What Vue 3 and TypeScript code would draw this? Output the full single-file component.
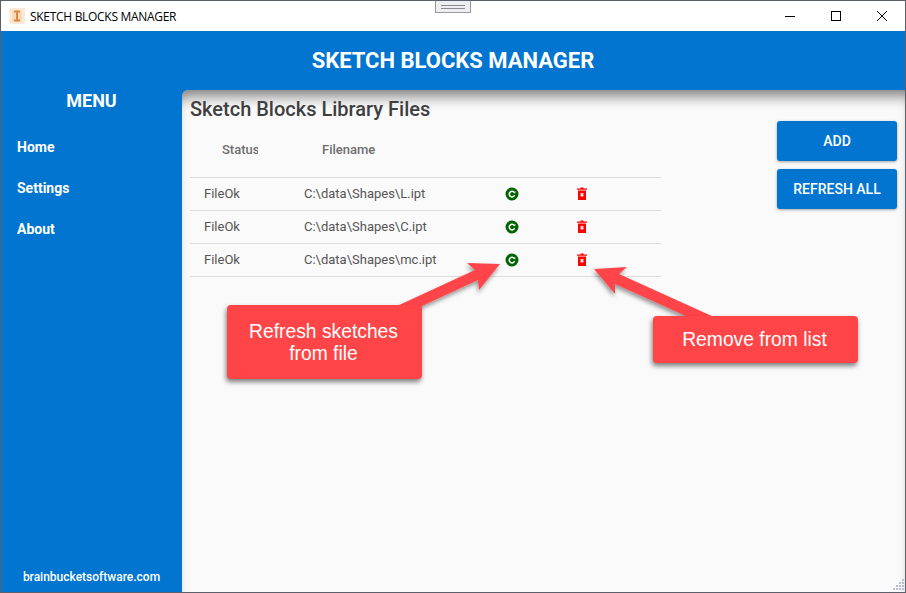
<script setup lang="ts">
interface Row { status: string; file: string }
const rows: Row[] = [
  { status: 'FileOk', file: 'C:\\data\\Shapes\\L.ipt' },
  { status: 'FileOk', file: 'C:\\data\\Shapes\\C.ipt' },
  { status: 'FileOk', file: 'C:\\data\\Shapes\\mc.ipt' },
]
const menu: string[] = ['Home', 'Settings', 'About']
const grip: [number, number][] = [[10,0],[7,3],[10,3],[4,6],[7,6],[10,6],[1,9],[4,9],[7,9],[10,9]]
</script>

<template>
  <div class="window">
    <div class="titlebar">
      <svg class="logo" width="16" height="16" viewBox="0 0 16 16">
        <rect width="16" height="16" fill="#fde9d9" />
        <rect x="3" y="2" width="10" height="12" fill="#fbd9bc" />
        <path d="M5 2.500h6v2H9v7h2v2H5v-2h2v-7H5z" fill="#d98a3d" />
      </svg>
      <span class="wintitle">SKETCH BLOCKS MANAGER</span>
      <div class="winbtns">
        <svg width="12" height="12" viewBox="0 0 12 12"><path d="M1 6.500h10" stroke="#000" fill="none" /></svg>
        <svg width="12" height="12" viewBox="0 0 12 12"><rect x="1.500" y="1.500" width="9" height="9" stroke="#000" fill="none" /></svg>
        <svg width="12" height="12" viewBox="0 0 12 12"><path d="M1 1l10 10M11 1L1 11" stroke="#000" fill="none" /></svg>
      </div>
    </div>
    <header class="appbar">SKETCH BLOCKS MANAGER</header>
    <div class="body">
      <aside class="sidebar">
        <div class="menutitle">MENU</div>
        <nav class="nav">
          <a v-for="m in menu" :key="m" class="navitem">{{ m }}</a>
        </nav>
        <div class="site">brainbucketsoftware.com</div>
      </aside>
      <main class="content">
        <section class="library">
          <h1 class="heading">Sketch Blocks Library Files</h1>
          <div class="thead">
            <span class="th status">Status</span>
            <span class="th">Filename</span>
          </div>
          <div v-for="r in rows" :key="r.file" class="row">
            <span class="cell">{{ r.status }}</span>
            <span class="cell">{{ r.file }}</span>
            <span class="iconcell">
              <svg width="14" height="14" viewBox="0 0 14 14">
                <circle cx="7" cy="7" r="6.500" fill="#006400" />
                <path d="M9.300 5.400A2.800 2.800 0 1 0 9.600 8.300" stroke="#fff" stroke-width="1.500" fill="none" />
                <path d="M8.100 5.900L10.300 6.200V3.900z" fill="#fff" />
              </svg>
            </span>
            <span class="iconcell trash">
              <svg width="10" height="13" viewBox="0 0 10 13">
                <path d="M0 1.500h3.500V0.500h3v1H10v1.200H0zM1 3.500h8V13H1z" fill="#f00" />
                <path d="M3.700 6.200l2.600 3M6.300 6.200l-2.600 3" stroke="#fff" stroke-width="1.300" fill="none" />
              </svg>
            </span>
          </div>
        </section>
        <div class="actions">
          <button class="btn">ADD</button>
          <button class="btn">REFRESH ALL</button>
        </div>
      </main>
    </div>

    <svg class="arrows" width="906" height="593" viewBox="0 0 906 593">
      <defs>
        <filter id="sh" x="-20%" y="-20%" width="140%" height="140%">
          <feDropShadow dx="-1" dy="3" stdDeviation="2" flood-color="#000" flood-opacity=".4" />
        </filter>
      </defs>
      <polygon filter="url(#sh)" points="500,264 467,263 475,270 397,306 422,306 478,280 479,290" fill="#ff4548" />
      <polygon filter="url(#sh)" points="594,269 627,267 619,274 714,317 688,317 615,284 615,294" fill="#ff4548" />
    </svg>
    <div class="callout one">Refresh sketches<br />from file</div>
    <div class="callout two">Remove from list</div>

    <div class="handle"></div>
    <svg class="grip" width="12" height="12" viewBox="0 0 12 12">
      <rect v-for="(g, i) in grip" :key="i" :x="g[0]" :y="g[1]" width="2" height="2" fill="#b9bfd6" />
    </svg>
  </div>
</template>

<style>
html, body { margin: 0; padding: 0; overflow: hidden; }
</style>

<style scoped>
.window {
  position: relative;
  box-sizing: border-box;
  width: 906px;
  height: 593px;
  border: 1px solid #5b6068;
  display: flex;
  flex-direction: column;
  overflow: hidden;
  font-family: Roboto, sans-serif;
  background: #0175cf;
}
.titlebar {
  flex: 0 0 30px;
  background: #fff;
  display: flex;
  align-items: center;
  padding-left: 8px;
  color: #000;
}
.logo { margin-right: 5px; }
.wintitle {
  font-family: "Open Sans", sans-serif;
  font-size: 12px;
  letter-spacing: -0.3px;
}
.winbtns {
  margin-left: auto;
  display: flex;
  gap: 34px;
  padding-right: 17px;
}
.appbar {
  flex: 0 0 59px;
  background: #0175cf;
  color: #fff;
  display: flex;
  align-items: center;
  justify-content: center;
  font-size: 22px;
  font-weight: 700;
}
.body { flex: 1; display: flex; min-height: 0; }
.sidebar {
  flex: 0 0 181px;
  display: flex;
  flex-direction: column;
  color: #fff;
}
.menutitle {
  font-size: 18px;
  font-weight: 700;
  text-align: center;
  line-height: 22px;
}
.nav {
  display: flex;
  flex-direction: column;
  margin-top: 15px;
}
.navitem {
  height: 41px;
  line-height: 41px;
  padding-left: 16px;
  font-size: 14px;
  font-weight: 700;
}
.site {
  margin-top: auto;
  text-align: center;
  font-size: 12px;
  font-weight: 500;
  line-height: 16px;
  padding-bottom: 7px;
}
.content {
  flex: 1;
  background: #fafafa;
  border-top-left-radius: 6px;
  box-shadow: inset 0 14px 14px -8px rgba(0, 0, 0, 0.5);
  display: flex;
  justify-content: space-between;
  padding: 0 8px;
}
.library { width: 471px; }
.heading {
  margin: 7px 0 0;
  font-size: 20px;
  font-weight: 500;
  line-height: 24px;
  color: #3f3f3f;
}
.thead {
  display: grid;
  grid-template-columns: 100px 187px;
  height: 56px;
  align-items: center;
}
.th {
  font-size: 13px;
  font-weight: 500;
  color: #6e6e6e;
  padding-left: 32px;
  overflow: hidden;
  white-space: nowrap;
}
.status { width: 36px; }
.row {
  display: grid;
  grid-template-columns: 100px 187px 70px 70px;
  align-items: center;
  height: 33px;
  box-sizing: border-box;
  border-top: 1px solid #dcdcdc;
}
.row:last-child { height: 34px; border-bottom: 1px solid #dcdcdc; }
.cell {
  font-size: 13px;
  line-height: 15px;
  color: #555;
  padding-left: 14px;
  padding-bottom: 2px;
}
.iconcell { display: flex; justify-content: center; align-items: center; }
.trash { padding-bottom: 1px; }
.actions {
  display: flex;
  flex-direction: column;
  gap: 8px;
  padding-top: 31px;
}
.btn {
  width: 120px;
  height: 40px;
  border: 0;
  border-radius: 3px;
  background: #0175cf;
  color: #fff;
  font-family: Roboto, sans-serif;
  font-size: 14px;
  font-weight: 500;
  padding: 0;
  box-shadow: 0 1px 3px rgba(0, 0, 0, 0.35);
}
.arrows { position: absolute; left: -1px; top: -1px; pointer-events: none; }
.callout {
  position: absolute;
  box-sizing: border-box;
  background: #ff4548;
  color: #fff;
  border-radius: 4px;
  font-family: "Liberation Sans", Arial, sans-serif;
  font-size: 19.3px;
  line-height: 22px;
  text-align: center;
  display: flex;
  align-items: center;
  justify-content: center;
  padding: 1px 2px 0 0;
  box-shadow: -1px 3px 5px rgba(0, 0, 0, 0.5);
}
.one { left: 226px; top: 304px; width: 195px; height: 74px; }
.two { left: 652px; top: 315px; width: 205px; height: 47px; }
.handle {
  position: absolute;
  left: 434px;
  top: -1px;
  width: 36px;
  height: 13px;
  box-sizing: border-box;
  background: #eeeef2;
  border: 1px solid #9a9a9a;
}
.handle::after {
  content: "";
  position: absolute;
  left: 5px;
  right: 5px;
  top: 4px;
  height: 2px;
  border-top: 1px solid #8c8c8c;
  border-bottom: 1px solid #8c8c8c;
}
.grip { position: absolute; right: 1px; bottom: 1px; }
</style>
